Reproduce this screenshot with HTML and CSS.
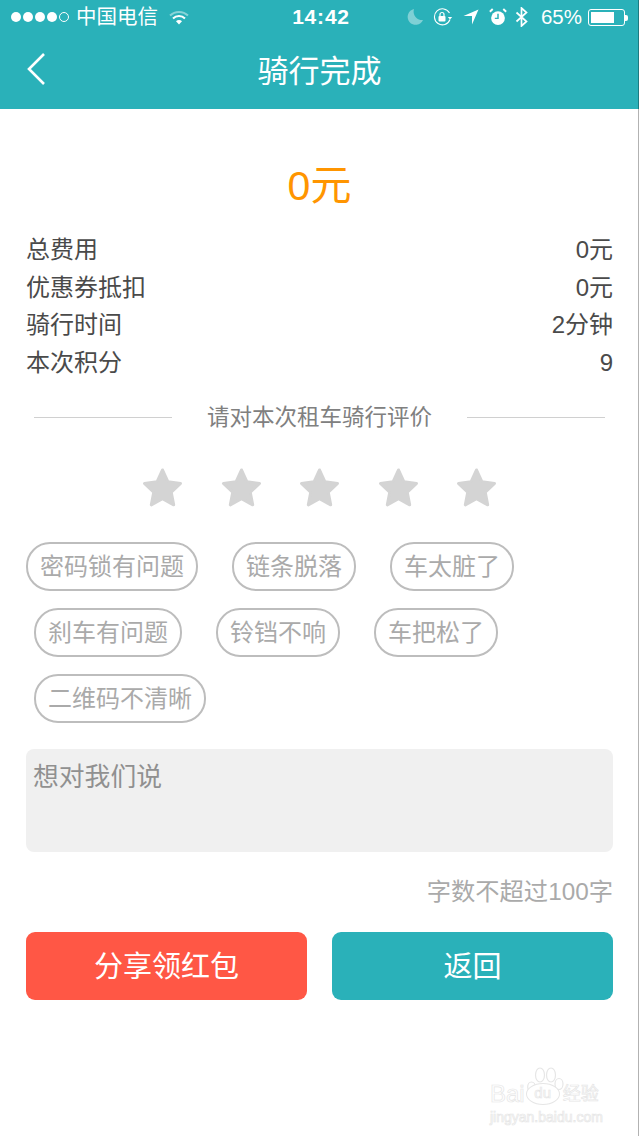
FILE: index.html

```html
<!DOCTYPE html>
<html lang="zh-CN">
<head>
  <meta charset="UTF-8">
  <title>骑行完成</title>
  <link rel="stylesheet" href="styles.css">
</head>
<body>
  <header class="top">
    <div class="status">
      <div class="status-left">
        <span class="dots"><i></i><i></i><i></i><i></i><i class="off"></i></span>
        <span class="carrier">中国电信</span>
        <svg class="wifi" width="20" height="15" viewBox="0 0 20 15">
          <path d="M1 5.500a13 13 0 0 1 18 0" fill="none" stroke="#fff" stroke-opacity=".45" stroke-width="2"/>
          <path d="M4 8.500a8.500 8.500 0 0 1 12 0" fill="none" stroke="#fff" stroke-width="2"/>
          <path d="M7 11.300a4 4 0 0 1 6 0L10 14.500z" fill="#fff"/>
        </svg>
      </div>
      <span class="clock">14:42</span>
      <div class="status-right">
        <svg width="16" height="16" viewBox="0 0 16 16"><path d="M7 0a8 8 0 1 0 9 11A8.500 8.500 0 0 1 7 0z" fill="#fff" fill-opacity=".4"/></svg>
        <svg width="20" height="18" viewBox="0 0 20 18">
          <path d="M17 11.500A8 8 0 1 1 16.500 5" fill="none" stroke="#fff" stroke-width="1.100"/>
          <path d="M14.800 9h4.400l-2.200 2.600z" fill="#fff"/>
          <rect x="5.500" y="8" width="7" height="5.500" rx="1" fill="#fff"/>
          <path d="M7 8V6.500a2 2 0 0 1 4 0V8" fill="none" stroke="#fff" stroke-width="1.200"/>
        </svg>
        <svg width="16" height="16" viewBox="0 0 16 16"><path d="M15.500 .5L9 15.500V7H.5z" fill="#fff"/></svg>
        <svg width="18" height="18" viewBox="0 0 17 17">
          <circle cx="8.500" cy="9.500" r="6.500" fill="#fff"/>
          <path d="M8.500 5.500v4.300H5.500" fill="none" stroke="#2ab1b9" stroke-width="1.400"/>
          <path d="M.8 3.500L3.500 1M16.200 3.500L13.500 1" stroke="#fff" stroke-width="1.800"/>
        </svg>
        <svg class="bt" width="14" height="20" viewBox="0 0 14 20"><path d="M1.500 5.500l10 9-5 4.500V1l5 4.500-10 9" fill="none" stroke="#fff" stroke-width="1.700"/></svg>
        <span class="percent">65%</span>
        <span class="battery"><span class="charge"></span></span>
      </div>
    </div>
    <div class="nav">
      <svg class="back" width="20" height="34" viewBox="0 0 20 34"><path d="M18 2L3 17l15 15" fill="none" stroke="#fff" stroke-width="2.600"/></svg>
      <h1>骑行完成</h1>
    </div>
  </header>

  <main class="content">
    <div class="amount">0元</div>

    <ul class="costs">
      <li><span>总费用</span><span>0元</span></li>
      <li><span>优惠券抵扣</span><span>0元</span></li>
      <li><span>骑行时间</span><span>2分钟</span></li>
      <li><span>本次积分</span><span>9</span></li>
    </ul>

    <div class="rate-title"><span>请对本次租车骑行评价</span></div>

    <div class="stars">
      <svg width="41" height="41" viewBox="0 0 42 42"><path class="star" d="M21 3l5.500 12 13 1.800-9.500 9 2.500 13L21 32.500 9.500 38.800 12 25.800l-9.500-9 13-1.800z"/></svg>
      <svg width="41" height="41" viewBox="0 0 42 42"><path class="star" d="M21 3l5.500 12 13 1.800-9.500 9 2.500 13L21 32.500 9.500 38.800 12 25.800l-9.500-9 13-1.800z"/></svg>
      <svg width="41" height="41" viewBox="0 0 42 42"><path class="star" d="M21 3l5.500 12 13 1.800-9.500 9 2.500 13L21 32.500 9.500 38.800 12 25.800l-9.500-9 13-1.800z"/></svg>
      <svg width="41" height="41" viewBox="0 0 42 42"><path class="star" d="M21 3l5.500 12 13 1.800-9.500 9 2.500 13L21 32.500 9.500 38.800 12 25.800l-9.500-9 13-1.800z"/></svg>
      <svg width="41" height="41" viewBox="0 0 42 42"><path class="star" d="M21 3l5.500 12 13 1.800-9.500 9 2.500 13L21 32.500 9.500 38.800 12 25.800l-9.500-9 13-1.800z"/></svg>
    </div>

    <div class="tags">
      <span class="tag">密码锁有问题</span>
      <span class="tag">链条脱落</span>
      <span class="tag">车太脏了</span>
    </div>
    <div class="tags indent">
      <span class="tag">刹车有问题</span>
      <span class="tag">铃铛不响</span>
      <span class="tag">车把松了</span>
    </div>
    <div class="tags indent">
      <span class="tag">二维码不清晰</span>
    </div>

    <div class="comment">想对我们说</div>
    <div class="limit">字数不超过100字</div>

    <div class="actions">
      <button class="btn share">分享领红包</button>
      <button class="btn back-btn">返回</button>
    </div>
  </main>

  <div class="watermark">
    <svg class="paw" width="38" height="30" viewBox="0 0 38 30">
      <g fill="#fff" stroke="#e6e6e6" stroke-width="1.200">
        <ellipse cx="4.500" cy="21" rx="3.800" ry="5"/>
        <ellipse cx="13" cy="9" rx="4.500" ry="7"/>
        <ellipse cx="24" cy="9" rx="4.500" ry="7"/>
        <ellipse cx="32" cy="18" rx="4" ry="5.500"/>
      </g>
    </svg>
    <div class="wm-logo">Bai<span class="wm-du">du</span><span class="wm-cn">经验</span></div>
    <div class="wm-url">jingyan.baidu.com</div>
  </div>
</body>
</html>
```

FILE: styles.css

```css
*{box-sizing:border-box;}
html,body{height:100%;}
body{position:relative;margin:0;height:1136px;overflow:hidden;background:#fff;font-family:"Liberation Sans","Noto Sans CJK SC",sans-serif;color:#333;}
body::after{content:"";position:absolute;top:0;right:0;bottom:0;width:1px;background:rgba(0,0,0,.3);}

.top{height:109px;background:#2ab1b9;color:#fff;}
.status{position:relative;display:flex;justify-content:space-between;align-items:center;height:34px;padding:0 14px 0 11px;}
.status-left{display:flex;align-items:center;}
.dots{display:flex;gap:2px;margin-right:7px;}
.dots i{width:10px;height:10px;border-radius:50%;background:#fff;}
.dots i.off{background:none;border:1px solid #fff;}
.carrier{font-size:20.500px;line-height:30px;margin-right:11px;}
.clock{position:absolute;left:3px;right:0;text-align:center;font-size:21px;font-weight:bold;letter-spacing:.8px;}
.status-right{display:flex;align-items:center;gap:10px;}
.bt{margin-left:-2px;}
.percent{font-size:20.500px;margin-left:2px;margin-right:-4px;}
.battery{position:relative;display:block;width:37px;height:17px;padding:2px;border:1px solid #fff;border-radius:3px;}
.battery::after{content:"";position:absolute;right:-4px;top:5px;width:3px;height:6px;background:#fff;border-radius:0 2px 2px 0;}
.charge{display:block;width:23px;height:100%;background:#fff;}

.nav{position:relative;display:flex;justify-content:center;align-items:center;height:75px;padding-bottom:6px;}
.nav h1{margin:0;font-size:31px;font-weight:normal;}
.back{position:absolute;left:26px;top:18px;}

.content{padding:0 26px;}
.amount{margin-top:50px;height:54px;line-height:54px;text-align:center;font-size:41px;color:#ff9500;}
.costs{list-style:none;margin:18px 0 0;padding:0;}
.costs li{display:flex;justify-content:space-between;height:37.500px;line-height:37.500px;font-size:24px;color:#4a4a4a;}

.rate-title{display:flex;align-items:center;gap:35px;margin:21px 8px 0;height:30px;font-size:22.500px;color:#808080;}
.rate-title span{margin-bottom:4px;}
.rate-title::before,.rate-title::after{content:"";flex:1;height:1px;background:#d0d0d0;}

.stars{display:flex;justify-content:center;gap:37.500px;margin-top:35px;height:40px;}
.star{fill:#d4d4d4;stroke:#d4d4d4;stroke-width:3;stroke-linejoin:round;}

.tags{display:flex;gap:34px;margin-top:17px;}
.stars + .tags{margin-top:35px;}
.tags.indent{padding-left:8px;}
.tag{height:49px;line-height:46px;padding:0 12px;border:2px solid #bdbdbd;border-radius:24px;font-size:24px;color:#aaa;}

.comment{height:103px;margin-top:26px;padding:10px 7px;border-radius:8px;background:#f0f0f0;font-size:25.800px;line-height:36px;color:#909090;}
.limit{margin-top:23px;height:34px;line-height:34px;text-align:right;font-size:24.300px;color:#aaa;}

.actions{display:flex;gap:25px;margin-top:23px;}
.btn{flex:1;height:68px;padding:0 0 4px;border:none;border-radius:9px;color:#fff;font-family:inherit;font-size:29px;}
.share{background:#ff5745;}
.back-btn{background:#2ab1b9;}

.watermark{position:absolute;left:490px;top:1066px;width:116px;color:#fff;-webkit-text-stroke:.7px #e6e6e6;}
.paw{position:absolute;left:37px;top:0;}
.wm-logo{position:relative;display:flex;align-items:center;height:24px;margin-top:16px;font-size:24px;line-height:24px;white-space:nowrap;}
.wm-du{width:34px;height:22px;margin:0 3px 0 1px;text-align:center;border:1.500px solid #e6e6e6;border-radius:50%;background:#fff;font-size:15px;line-height:18px;}
.wm-cn{font-size:18px;}
.wm-url{position:absolute;top:43px;left:0;font-size:14px;line-height:16px;white-space:nowrap;}
```
